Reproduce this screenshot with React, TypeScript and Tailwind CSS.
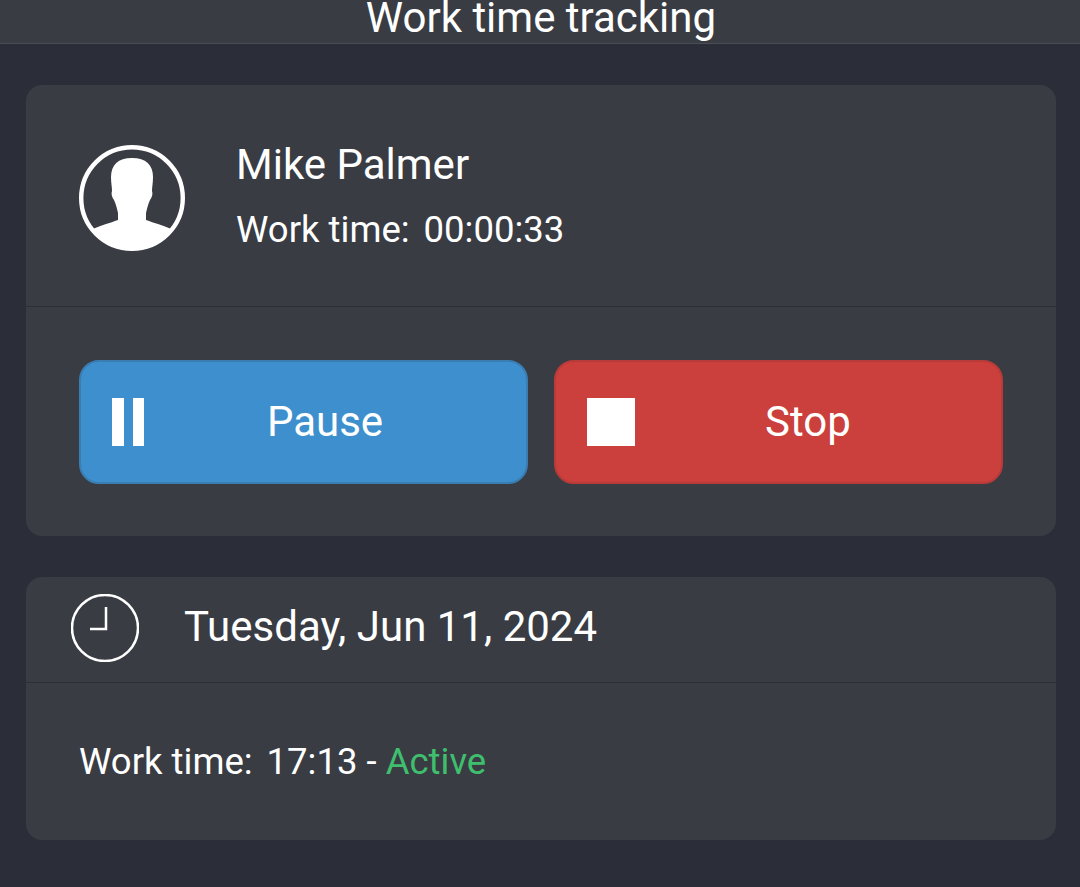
export default function App() {
  return (
    <div className="h-[887px] w-[1080px] overflow-hidden bg-[#2b2e38] text-white" style={{ fontFamily: '"Roboto", "Liberation Sans", sans-serif' }}>
      <header className="flex h-[44px] items-start justify-center border-b border-[#494c53] bg-[#393c43] pl-[2px] text-[42px] leading-[35px]">
        Work time tracking
      </header>
      <main className="flex flex-col gap-[41px] pl-[26px] pr-[24px] pt-[41px]">
        <section className="h-[451px] rounded-[16px] bg-[#393c43]">
          <div className="flex h-[222px] items-center border-b border-[#2d2f38] pl-[53px]">
            <svg width="106" height="106" viewBox="0 0 106 106" className="mt-[5px] shrink-0">
              <defs>
                <clipPath id="avatarClip"><circle cx="53" cy="53" r="51" /></clipPath>
              </defs>
              <circle cx="53" cy="53" r="50.8" fill="none" stroke="#fff" strokeWidth="4.4" />
              <path clipPath="url(#avatarClip)" fill="#fff" d="M53 13C39 13 32 20 32 32C32 38 33 42 33 46C32 49 33 52 35 55C37 59 38 64 39 68L39 75C31 78 22 80 12 85L12 106L94 106L94 85C84 80 75 78 67 75L67 68C68 64 69 59 71 55C73 52 74 49 73 46C73 42 74 38 74 32C74 20 67 13 53 13Z" />
            </svg>
            <div className="ml-[51px] flex flex-col pb-[1px]">
              <div className="text-[42px] leading-[47px]">Mike Palmer</div>
              <div className="mt-[21px] flex gap-[14px] text-[36.5px] leading-[41px]">
                <span>Work time:</span>
                <span>00:00:33</span>
              </div>
            </div>
          </div>
          <div className="flex gap-[26px] px-[53px] pt-[53px]">
            <button className="flex h-[124px] flex-1 items-center rounded-[20px] border-2 border-[#3a7db3] bg-[#3e8fcd] pl-[31px] pr-[20px] text-[42px]">
              <span className="flex shrink-0 gap-[9px]">
                <span className="h-[48px] w-[12px] bg-white" />
                <span className="h-[48px] w-[11px] bg-white" />
              </span>
              <span className="mb-[2px] flex-1 text-center">Pause</span>
            </button>
            <button className="flex h-[124px] flex-1 items-center rounded-[20px] border-2 border-[#b83b39] bg-[#cb3f3c] pl-[31px] pr-[20px] text-[42px]">
              <span className="h-[48px] w-[48px] shrink-0 bg-white" />
              <span className="mb-[2px] flex-1 text-center">Stop</span>
            </button>
          </div>
        </section>
        <section className="h-[263px] rounded-[16px] bg-[#393c43]">
          <div className="flex h-[106px] items-center border-b border-[#2d2f38] pb-[4px] pl-[45px]">
            <svg width="68" height="68" viewBox="0 0 68 68" fill="none" stroke="#fff" className="shrink-0">
              <circle cx="34" cy="34" r="33" strokeWidth="2.5" />
              <path d="M35 13v22H19" strokeWidth="2.5" />
            </svg>
            <span className="mb-[2px] ml-[45px] text-[42px] leading-[47px]">Tuesday, Jun 11, 2024</span>
          </div>
          <div className="flex pl-[53px] pt-[58px] text-[36.5px] leading-[41px]">
            <span>Work time:</span>
            <span className="ml-[14px]">17:13 -&nbsp;</span>
            <span className="text-[#3fbf6e]">Active</span>
          </div>
        </section>
      </main>
    </div>
  );
}
